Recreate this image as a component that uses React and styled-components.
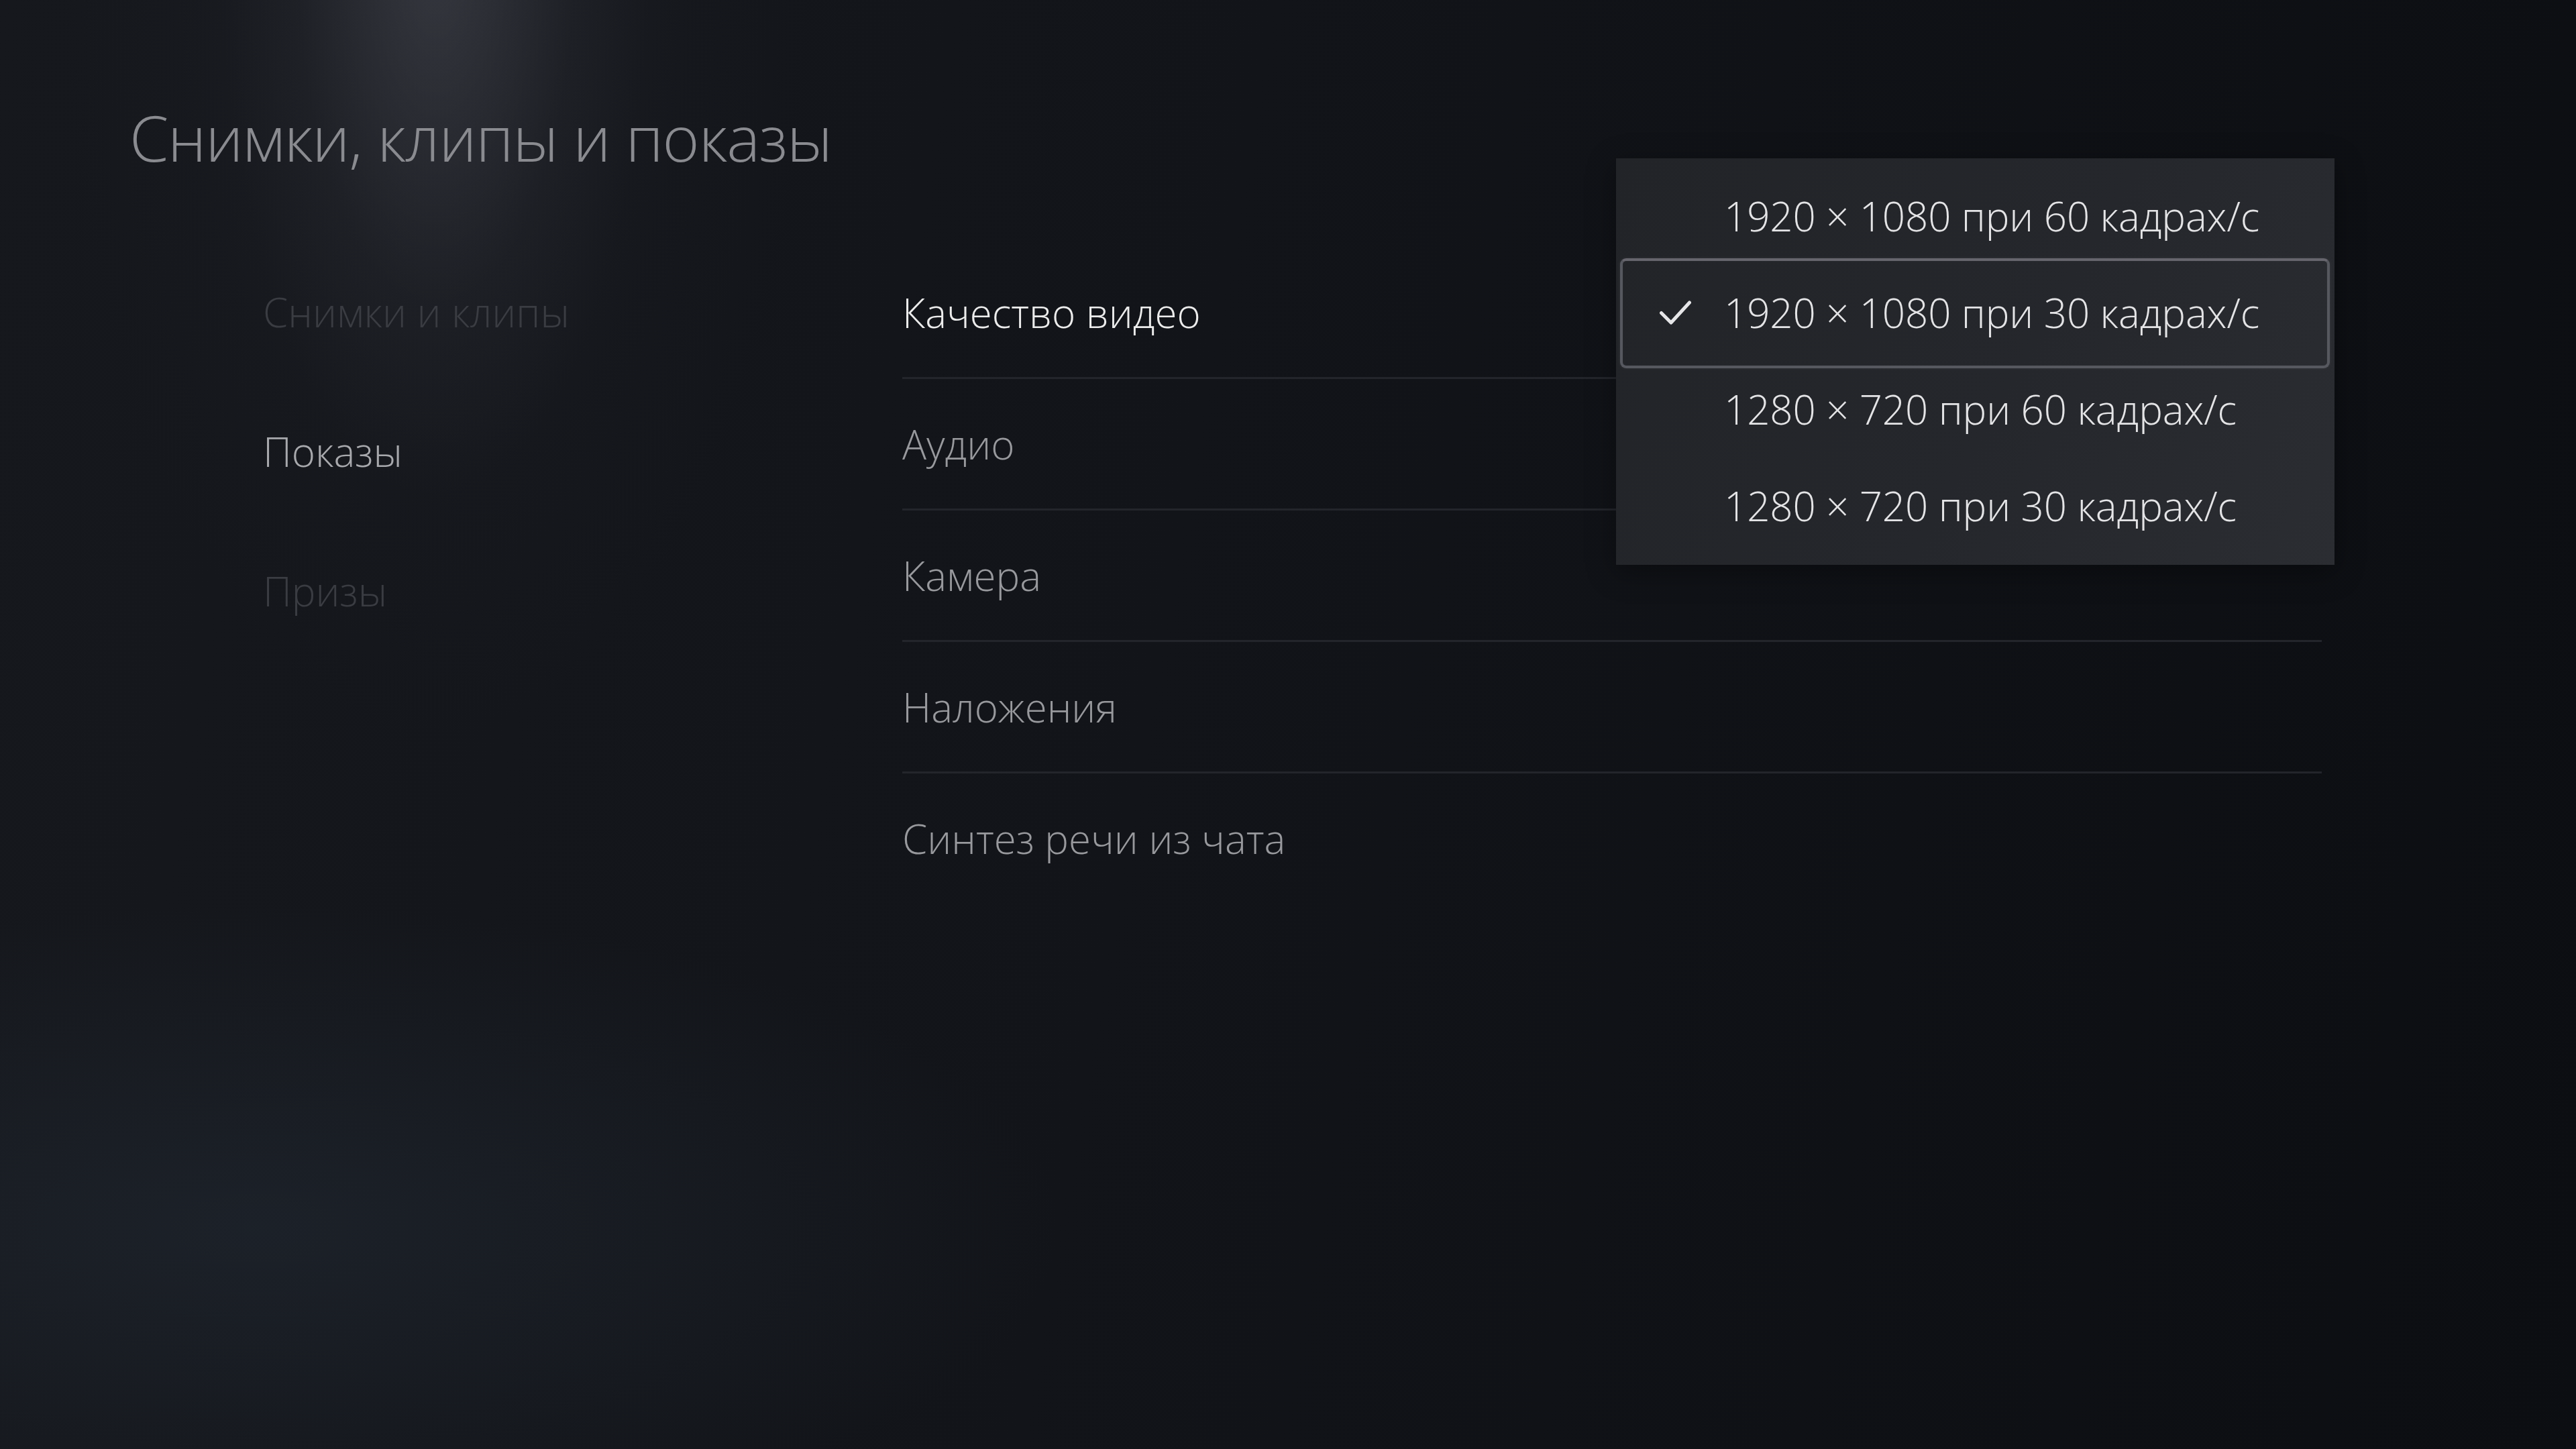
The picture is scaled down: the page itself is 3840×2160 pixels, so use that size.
import React from 'react';
import styled, { createGlobalStyle } from 'styled-components';

const GlobalStyle = createGlobalStyle`
  html, body {
    margin: 0;
    padding: 0;
    background: #111318;
  }
  * {
    box-sizing: border-box;
  }
`;

const StyledScreen = styled.div`
  position: relative;
  width: 3840px;
  height: 2160px;
  overflow: hidden;
  font-family: 'Open Sans', 'Noto Sans', sans-serif;
  font-weight: 300;
  background:
    radial-gradient(ellipse 320px 820px at 650px -80px, rgba(88, 90, 100, 0.4), rgba(60, 62, 70, 0.12) 65%, transparent 100%),
    radial-gradient(ellipse 560px 1200px at 650px -100px, rgba(52, 54, 62, 0.32), rgba(40, 42, 50, 0.08) 70%, transparent 100%),
    radial-gradient(ellipse 1200px 480px at 380px 1830px, rgba(34, 42, 52, 0.55), transparent 100%),
    linear-gradient(100deg, #16181d 0%, #121419 45%, #0c0e12 100%);
`;

const StyledTitle = styled.h1`
  margin: 0;
  padding: 141px 0 0 193px;
  font-size: 94px;
  line-height: 128px;
  font-weight: 300;
  letter-spacing: -1.3px;
  color: #8a8b90;
`;

const StyledBody = styled.div`
  display: grid;
  grid-template-columns: 953px 2116px;
  margin-top: 92px;
  padding-left: 392px;
`;

const StyledNav = styled.nav`
  display: flex;
  flex-direction: column;
`;

const StyledNavItem = styled.div`
  height: 208px;
  display: flex;
  align-items: center;
  font-size: 60px;
  color: ${props => (props.active ? '#a8a9ad' : '#3a3c42')};
`;

const StyledMain = styled.div`
  position: relative;
  padding-top: 8px;
`;

const StyledRow = styled.div`
  height: 196px;
  display: flex;
  align-items: center;
  font-size: 60px;
  color: ${props => (props.selected ? '#ececec' : '#98999d')};
  border-bottom: 3px solid ${props => (props.last ? 'transparent' : '#23252b')};
`;

const StyledDropdown = styled.div`
  position: absolute;
  left: 1064px;
  top: -125px;
  width: 1071px;
  padding: 14px 0 16px;
  background: linear-gradient(120deg, #222428 0%, #25272c 55%, #2b2d32 100%);
  box-shadow: 0 10px 40px rgba(0, 0, 0, 0.35);
`;

const StyledOption = styled.div`
  position: relative;
  height: 144px;
  display: flex;
  align-items: center;
  padding-left: 65px;
  font-size: 60px;
  letter-spacing: -0.1px;
  color: #e4e4e6;

  &::after {
    content: '';
    display: ${props => (props.checked ? 'block' : 'none')};
    position: absolute;
    top: -9px;
    bottom: -11px;
    left: 6px;
    right: 7px;
    border: 4px solid #56585f;
    border-top-color: #66656d;
    border-radius: 9px;
    box-shadow: 0 0 4px rgba(255, 255, 255, 0.08), inset 0 0 3px rgba(255, 255, 255, 0.05);
  }
`;

const StyledCheckSlot = styled.span`
  width: 96px;
  flex: none;
  display: flex;
  align-items: center;
`;

const CheckIcon = () => (
  <svg width="47" height="36" viewBox="0 0 47 36" fill="none">
    <path d="M2.5 18.5 17 33 44.5 3" stroke="#e6e6e8" strokeWidth="5" strokeLinecap="round" strokeLinejoin="round" />
  </svg>
);

const navItems = [
  { label: 'Снимки и клипы', active: false },
  { label: 'Показы', active: true },
  { label: 'Призы', active: false },
];

const rows = ['Качество видео', 'Аудио', 'Камера', 'Наложения', 'Синтез речи из чата'];

const options = [
  '1920 × 1080 при 60 кадрах/с',
  '1920 × 1080 при 30 кадрах/с',
  '1280 × 720 при 60 кадрах/с',
  '1280 × 720 при 30 кадрах/с',
];

const App = () => {
  const checkedOption = 1;

  return (
    <StyledScreen>
      <GlobalStyle />
      <StyledTitle>Снимки, клипы и показы</StyledTitle>
      <StyledBody>
        <StyledNav>
          {navItems.map(item => (
            <StyledNavItem key={item.label} active={item.active}>
              {item.label}
            </StyledNavItem>
          ))}
        </StyledNav>
        <StyledMain>
          {rows.map((row, i) => (
            <StyledRow key={row} selected={i === 0} last={i === rows.length - 1}>
              {row}
            </StyledRow>
          ))}
          <StyledDropdown>
            {options.map((option, i) => (
              <StyledOption key={option} checked={i === checkedOption}>
                <StyledCheckSlot>{i === checkedOption && <CheckIcon />}</StyledCheckSlot>
                {option}
              </StyledOption>
            ))}
          </StyledDropdown>
        </StyledMain>
      </StyledBody>
    </StyledScreen>
  );
};

export default App;
